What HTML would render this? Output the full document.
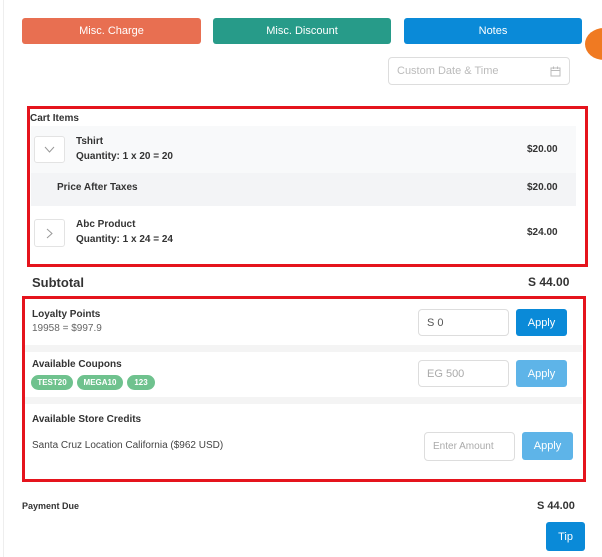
<!DOCTYPE html>
<html><head><style>
*{margin:0;padding:0;box-sizing:border-box}
body{width:602px;height:557px;background:#fff;font-family:"Liberation Sans",sans-serif;position:relative;overflow:hidden;color:#333}
.a{position:absolute}
.btn{position:absolute;color:#fff;font-size:11px;display:flex;align-items:center;justify-content:center;border-radius:3px}
.b{font-weight:bold;font-size:10px;color:#333}
.inp{position:absolute;border:1px solid #ddd;border-radius:4px;font-size:11px;color:#aaa;padding-left:8px;display:flex;align-items:center;background:#fff}
.chip{position:absolute;background:#6fc28e;color:#fff;font-size:8px;font-weight:bold;border-radius:8px;height:15px;display:flex;align-items:center;justify-content:center}
.box{position:absolute;border:1px solid #e3e3e3;border-radius:3px;background:#fff;color:#999;font-size:12px;display:flex;align-items:center;justify-content:center}
</style></head><body>
<div class="a" style="left:3px;top:0;width:1px;height:557px;background:#eee"></div>
<div class="btn" style="left:22px;top:18px;width:179px;height:26px;background:#e86f51">Misc. Charge</div>
<div class="btn" style="left:213px;top:18px;width:178px;height:26px;background:#279b89">Misc. Discount</div>
<div class="btn" style="left:404px;top:18px;width:178px;height:26px;background:#0a8ad8">Notes</div>
<div class="a" style="left:585px;top:28px;width:38px;height:32px;border-radius:50%;background:#f07a22"></div>
<div class="inp" style="left:388px;top:57px;width:182px;height:28px;color:#bbb">Custom Date &amp; Time
<svg class="a" style="left:161px;top:8px" width="11" height="11" viewBox="0 0 11 11"><rect x="1" y="2" width="9" height="8" fill="none" stroke="#bbb"/><line x1="1" y1="4.5" x2="10" y2="4.5" stroke="#bbb"/><line x1="3.5" y1="0.5" x2="3.5" y2="3" stroke="#bbb"/><line x1="7.5" y1="0.5" x2="7.5" y2="3" stroke="#bbb"/></svg></div>

<div class="a" style="left:31px;top:126px;width:545px;height:47px;background:#f8f9fa"></div>
<div class="a" style="left:31px;top:173px;width:545px;height:33px;background:#f3f4f6"></div>
<div class="a" style="left:27px;top:106px;width:561px;height:161px;border:3px solid #e5141d"></div>
<div class="a b" style="left:30px;top:113px">Cart Items</div>
<div class="box" style="left:34px;top:136px;width:31px;height:27px"><svg width="11" height="7"><path d="M1 1L5.5 6L10 1" fill="none" stroke="#999"/></svg></div>
<div class="a b" style="left:76px;top:136px">Tshirt</div>
<div class="a b" style="left:76px;top:151px">Quantity: 1 x 20 = 20</div>
<div class="a b" style="left:527px;top:144px">$20.00</div>
<div class="a b" style="left:57px;top:182px">Price After Taxes</div>
<div class="a b" style="left:527px;top:182px">$20.00</div>
<div class="box" style="left:34px;top:219px;width:31px;height:28px"><svg width="7" height="11"><path d="M1 1L6 5.5L1 10" fill="none" stroke="#999"/></svg></div>
<div class="a b" style="left:76px;top:219px">Abc Product</div>
<div class="a b" style="left:76px;top:234px">Quantity: 1 x 24 = 24</div>
<div class="a b" style="left:527px;top:227px">$24.00</div>

<div class="a b" style="left:32px;top:275px;font-size:13px">Subtotal</div>
<div class="a b" style="left:528px;top:275px;font-size:12px">S 44.00</div>

<div class="a" style="left:25px;top:345px;width:557px;height:7px;background:#f4f4f4"></div>
<div class="a" style="left:25px;top:397px;width:557px;height:7px;background:#f4f4f4"></div>
<div class="a" style="left:22px;top:296px;width:564px;height:186px;border:3px solid #e5141d"></div>
<div class="a b" style="left:32px;top:309px">Loyalty Points</div>
<div class="a" style="left:32px;top:323px;font-size:10px;color:#666">19958 = $997.9</div>
<div class="inp" style="left:418px;top:309px;width:91px;height:27px;color:#555">S 0</div>
<div class="btn" style="left:516px;top:309px;width:51px;height:27px;background:#0a8ad8">Apply</div>
<div class="a b" style="left:32px;top:359px">Available Coupons</div>
<div class="chip" style="left:31px;top:375px;width:42px">TEST20</div>
<div class="chip" style="left:77px;top:375px;width:46px">MEGA10</div>
<div class="chip" style="left:127px;top:375px;width:28px">123</div>
<div class="inp" style="left:418px;top:360px;width:91px;height:27px">EG 500</div>
<div class="btn" style="left:516px;top:360px;width:51px;height:27px;background:#5eb4e8">Apply</div>
<div class="a b" style="left:32px;top:414px">Available Store Credits</div>
<div class="a" style="left:32px;top:440px;font-size:10px;color:#444">Santa Cruz Location California ($962 USD)</div>
<div class="inp" style="left:424px;top:432px;width:91px;height:29px;font-size:10px">Enter Amount</div>
<div class="btn" style="left:522px;top:432px;width:51px;height:28px;background:#5eb4e8">Apply</div>

<div class="a b" style="left:22px;top:501px;font-size:9px">Payment Due</div>
<div class="a b" style="left:537px;top:500px;font-size:11px">S 44.00</div>
<div class="btn" style="left:546px;top:522px;width:39px;height:29px;background:#0a8ad8">Tip</div>
</body></html>
